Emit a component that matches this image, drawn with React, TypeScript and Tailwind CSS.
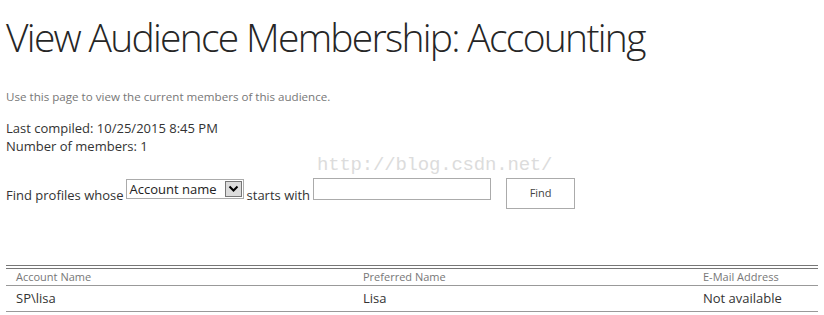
import React from "react";

export default function App() {
  return (
    <div
      className="relative w-[824px] h-[315px] bg-white overflow-hidden text-[#444]"
      style={{ fontFamily: '"Open Sans", "Noto Sans", sans-serif' }}
    >
      <div className="px-[6px]">
        <h1 className="pt-[9px] text-[39px] leading-[56px] font-light text-[#262626] tracking-[-1.72px]">
          View Audience Membership: Accounting
        </h1>
        <p className="mt-[24px] text-[11.6px] leading-[16px] text-[#777]">
          Use this page to view the current members of this audience.
        </p>
        <div className="mt-[14px] text-[13px] leading-[18px] text-[#333]">
          <div>Last compiled: 10/25/2015 8:45 PM</div>
          <div>Number of members: 1</div>
        </div>
        <div className="mt-[23px] flex items-start text-[13px] text-[#333]">
          <span className="mt-[8px]">Find profiles whose</span>
          <div className="ml-[2px] mt-[1px] flex items-center h-[20px] w-[118px] border border-[#ababab] bg-white">
            <span className="flex-1 pl-[3px] text-[13px] leading-[18px] text-[#222]">Account name</span>
            <span className="mr-[1px] flex items-center justify-center w-[17px] h-[16px] border border-[#777] bg-[#dcdcdc]">
              <svg width="11" height="8" viewBox="0 0 11 8">
                <path d="M1.5 1.5 L5.5 5.5 L9.5 1.5" fill="none" stroke="#000" strokeWidth="2" />
              </svg>
            </span>
          </div>
          <span className="mt-[8px] ml-[3px]">starts with</span>
          <div className="ml-[3px] h-[22px] w-[178px] border border-[#ababab] bg-white" />
          <button className="ml-[15px] h-[31px] w-[69px] border border-[#ababab] bg-white text-[11px] text-[#444]">
            Find
          </button>
        </div>
        <div className="mt-[56px] border-t border-[#777] pt-[2px]">
          <div className="border-t border-[#777]">
            <div className="grid grid-cols-[347px_340px_1fr] pl-[10px] text-[11px] leading-[16px] text-[#777] h-[17px] items-end border-b border-[#999]">
              <div>Account Name</div>
              <div>Preferred Name</div>
              <div>E-Mail Address</div>
            </div>
            <div className="grid grid-cols-[347px_340px_1fr] pl-[10px] text-[13px] leading-[25px] text-[#333] border-b border-[#999]">
              <div>SP\lisa</div>
              <div>Lisa</div>
              <div>Not available</div>
            </div>
          </div>
        </div>
      </div>
      <div
        className="absolute left-[317px] top-[151px] text-[19px] text-[#dcdcdc] tracking-[-0.2px]"
        style={{ fontFamily: '"Liberation Mono", monospace' }}
      >
        http://blog.csdn.net/
      </div>
    </div>
  );
}
